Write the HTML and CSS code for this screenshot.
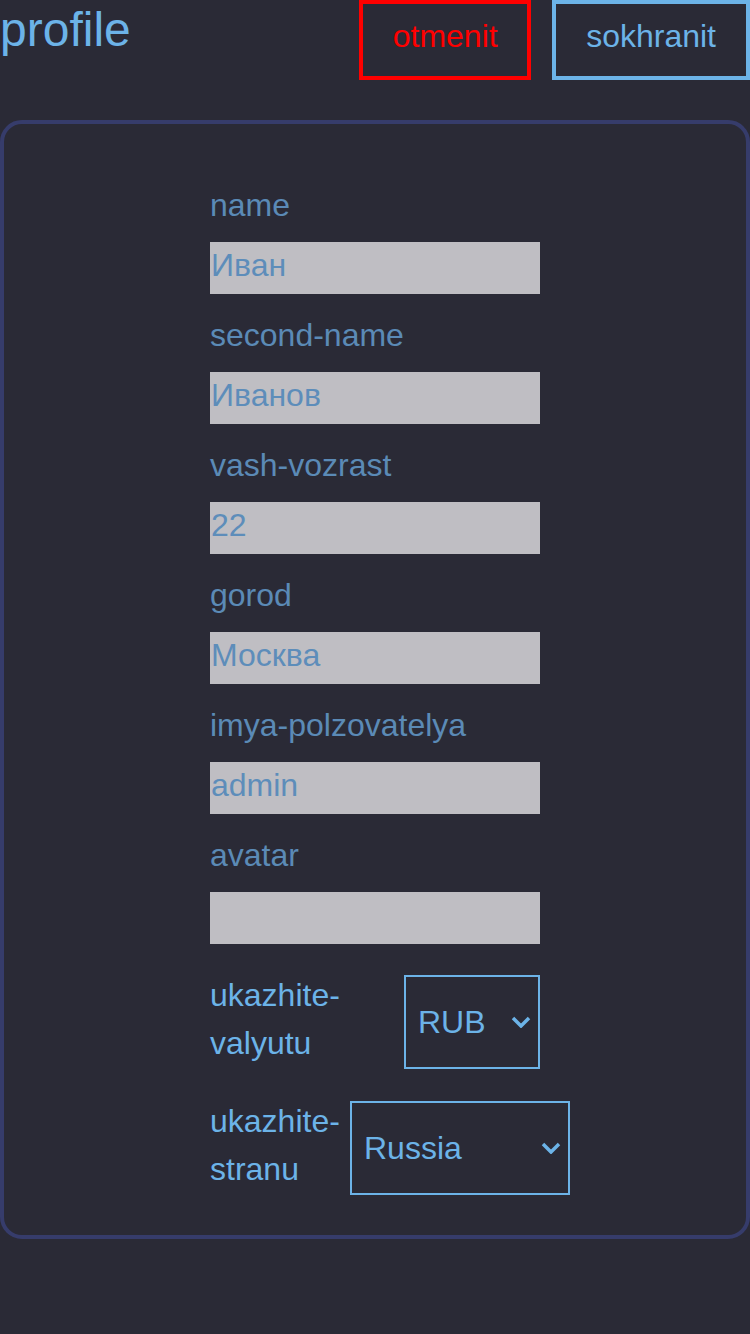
FILE: index.html
```html
<!DOCTYPE html>
<html lang="ru">
<head>
<meta charset="utf-8">
<title>profile</title>
<link rel="stylesheet" href="styles.css">
</head>
<body>
<header class="top">
  <h1 class="title">profile</h1>
  <div class="actions">
    <button class="btn btn-cancel" type="button">otmenit</button>
    <button class="btn btn-save" type="button">sokhranit</button>
  </div>
</header>
<main class="card">
  <form class="form">
    <div class="field">
      <label class="field-label">name</label>
      <input class="field-input" type="text" value="Иван">
    </div>
    <div class="field">
      <label class="field-label">second-name</label>
      <input class="field-input" type="text" value="Иванов">
    </div>
    <div class="field">
      <label class="field-label">vash-vozrast</label>
      <input class="field-input" type="text" value="22">
    </div>
    <div class="field">
      <label class="field-label">gorod</label>
      <input class="field-input" type="text" value="Москва">
    </div>
    <div class="field">
      <label class="field-label">imya-polzovatelya</label>
      <input class="field-input" type="text" value="admin">
    </div>
    <div class="field">
      <label class="field-label">avatar</label>
      <input class="field-input" type="text" value="">
    </div>
    <div class="row row-currency">
      <label class="row-label">ukazhite-valyutu</label>
      <div class="select-box select-currency">
        <select class="select"><option>RUB</option></select>
        <svg class="chevron" width="20" height="12" viewBox="0 0 20 12"><path d="M2 2 L10 10 L18 2" fill="none" stroke="#6cb3e8" stroke-width="3.5"/></svg>
      </div>
    </div>
    <div class="row row-country">
      <label class="row-label row-label-narrow">ukazhite-stranu</label>
      <div class="select-box select-country">
        <select class="select"><option>Russia</option></select>
        <svg class="chevron" width="20" height="12" viewBox="0 0 20 12"><path d="M2 2 L10 10 L18 2" fill="none" stroke="#6cb3e8" stroke-width="3.5"/></svg>
      </div>
    </div>
  </form>
</main>
</body>
</html>
```
FILE: styles.css
```css
* { box-sizing: border-box; }

html, body {
  margin: 0;
  padding: 0;
  background: #2a2a36;
  min-height: 1334px;
}

body {
  font-family: "Liberation Sans", Arial, sans-serif;
  font-size: 32px;
  color: #6cb3e8;
}

.top {
  display: flex;
  align-items: flex-start;
  height: 80px;
}

.title {
  flex: 1;
  margin: 0;
  font-size: 48px;
  font-weight: normal;
  line-height: 60px;
  color: #6cb3e8;
}

.actions {
  display: flex;
  gap: 21px;
}

.btn {
  font-family: "Liberation Sans", Arial, sans-serif;
  font-size: 32px;
  line-height: normal;
  height: 80px;
  padding: 14px 30px 21px;
  background: transparent;
  border: 4px solid;
  border-radius: 0;
}

.btn-cancel {
  color: #ff0000;
  border-color: #ff0000;
  padding-left: 29.5px;
  padding-right: 29.5px;
}

.btn-save {
  color: #6cb3e8;
  border-color: #6cb3e8;
}

.card {
  display: block;
  margin-top: 40px;
  border: 4px solid #363c6b;
  border-radius: 22px;
  padding: 57px 0 40px;
}

.form {
  width: 330px;
  margin: 0 auto;
}

.field {
  display: flex;
  flex-direction: column;
  margin-bottom: 17px;
}

.field-label {
  line-height: 48px;
  color: #5b8ab6;
  margin-bottom: 13px;
}

.field-input {
  width: 330px;
  height: 52px;
  border: none;
  border-radius: 0;
  outline: none;
  background: #bfbec3;
  color: #5d8dba;
  font-family: "Liberation Sans", Arial, sans-serif;
  font-size: 32px;
  line-height: normal;
  padding: 5px 1px 10px;
}

.row {
  display: flex;
  align-items: flex-start;
}

.row-currency {
  margin-top: 27px;
  margin-bottom: 28px;
}

.row .select-box {
  margin-top: 4px;
}

.row-label {
  flex: 1;
  min-width: 0;
  line-height: 48px;
  color: #6cb3e8;
}

.row-label-narrow {
  flex: 0 0 140px;
}

.select-box {
  display: flex;
  align-items: center;
  flex-shrink: 0;
  height: 94px;
  border: 2px solid #6cb3e8;
  padding-right: 7px;
}

.select-currency { width: 136px; }
.select-country { width: 220px; }

.select {
  flex: 1;
  min-width: 0;
  height: 100%;
  appearance: none;
  -webkit-appearance: none;
  background: transparent;
  border: none;
  outline: none;
  color: #6cb3e8;
  font-family: "Liberation Sans", Arial, sans-serif;
  font-size: 32px;
  padding: 0 0 0 12px;
  margin: 0;
}

.chevron {
  flex-shrink: 0;
  display: block;
}
```
